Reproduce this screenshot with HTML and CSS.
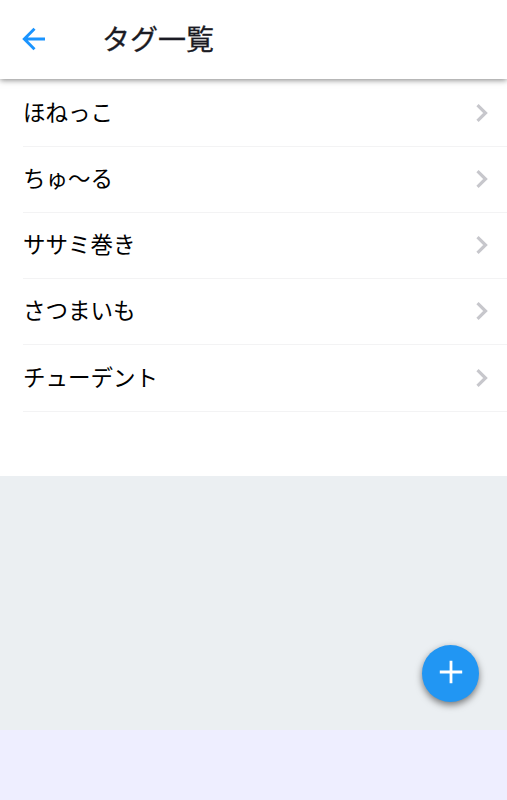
FILE: index.html
```html
<!DOCTYPE html>
<html lang="ja">
<head>
<meta charset="utf-8">
<title>タグ一覧</title>
<link rel="stylesheet" href="styles.css">
</head>
<body>
<header class="bar">
  <svg class="back" viewBox="0 0 24 24" width="24" height="24"><path d="M23 12H2.5M12.5 1.8L2.3 12l10.2 10.2"/></svg>
  <h1 class="title">タグ一覧</h1>
</header>
<main class="content">
  <ul class="list">
    <li class="row"><span class="label">ほねっこ</span><svg class="chevron" viewBox="0 0 12 18"><path d="M1.5 1.2L9.5 9l-8 7.8"/></svg></li>
    <li class="row"><span class="label">ちゅ〜る</span><svg class="chevron" viewBox="0 0 12 18"><path d="M1.5 1.2L9.5 9l-8 7.8"/></svg></li>
    <li class="row"><span class="label">ササミ巻き</span><svg class="chevron" viewBox="0 0 12 18"><path d="M1.5 1.2L9.5 9l-8 7.8"/></svg></li>
    <li class="row"><span class="label">さつまいも</span><svg class="chevron" viewBox="0 0 12 18"><path d="M1.5 1.2L9.5 9l-8 7.8"/></svg></li>
    <li class="row"><span class="label">チューデント</span><svg class="chevron" viewBox="0 0 12 18"><path d="M1.5 1.2L9.5 9l-8 7.8"/></svg></li>
  </ul>
</main>
<footer class="footer"></footer>
<button class="fab" aria-label="追加"><svg viewBox="0 0 24 24" width="24" height="24"><path d="M12 .8v22.4M.8 12h22.4"/></svg></button>
</body>
</html>
```
FILE: styles.css
```css
* { box-sizing: border-box; }
body {
  margin: 0;
  height: 800px;
  display: flex;
  flex-direction: column;
  background: #ebeff2;
  color: #000;
  font-family: "Noto Sans CJK JP", sans-serif;
}
.bar {
  height: 79px;
  flex: none;
  display: flex;
  align-items: center;
  padding-left: 22px;
  background: #fff;
  box-shadow: 0 1px 6px rgba(0, 0, 0, .5);
  z-index: 1;
}
.back { margin-bottom: 1px; fill: none; stroke: #1a94ff; stroke-width: 2.9; }
.title {
  margin: 0 0 4px 56px;
  font-size: 28px;
  font-weight: 400;
  line-height: 40px;
  color: #1b1b24;
  -webkit-text-stroke: .3px #1b1b24;
}
.content { flex: 1; }
.list {
  margin: 0;
  padding: 2px 0 0 23px;
  height: 397px;
  list-style: none;
  background: #fff;
}
.row {
  height: 66px;
  display: flex;
  align-items: center;
  justify-content: space-between;
  padding-right: 19px;
  border-bottom: 1px solid #f3f3f4;
}
.row:last-child { height: 67px; }
.label { margin-bottom: 5px; font-size: 22.5px; line-height: 32px; }
.chevron { width: 12px; height: 18px; margin-bottom: 1px; fill: none; stroke: #c7c7cc; stroke-width: 3.2; }
.footer { height: 70px; flex: none; background: #eeeeff; }
.fab {
  position: absolute;
  left: 422px;
  top: 645px;
  width: 57px;
  height: 57px;
  padding: 0 0 3px;
  display: grid;
  place-items: center;
  border: 0;
  border-radius: 50%;
  background: #2196f3;
  box-shadow: 0 3px 7px rgba(0, 0, 0, .5);
  z-index: 2;
}
.fab svg { fill: none; stroke: #fff; stroke-width: 2.8; }
```
